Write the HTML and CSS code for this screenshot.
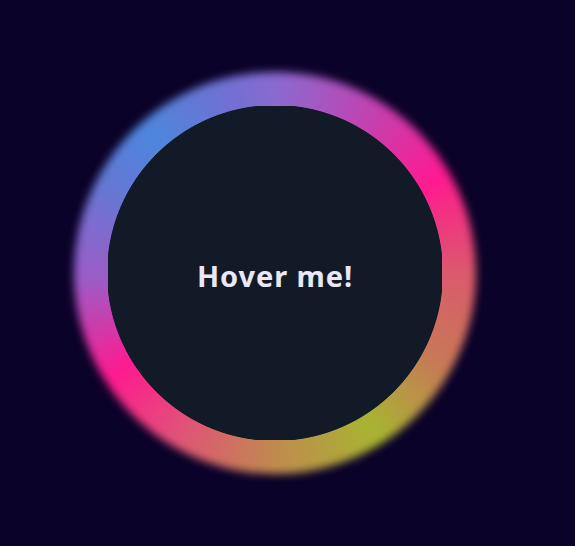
FILE: index.html
```html
<!DOCTYPE html>
<html lang="en">
<head>
<meta charset="utf-8">
<title>Hover me</title>
<link rel="stylesheet" href="styles.css">
</head>
<body>
<main class="stage">
  <div class="orb">
    <div class="ring"></div>
    <div class="core"><span class="label">Hover me!</span></div>
  </div>
</main>
</body>
</html>
```
FILE: styles.css
```css
html, body {
  margin: 0;
  padding: 0;
  background: #0b0229;
}
.stage {
  height: 546px;
  display: grid;
  place-items: center;
  padding-right: 25px;
  box-sizing: border-box;
}
.orb {
  width: 402px;
  height: 402px;
  display: grid;
}
.ring, .core {
  grid-area: 1 / 1;
}
.ring {
  border-radius: 50%;
  background: conic-gradient(
    #8a6ad0 0deg,
    #c043b2 30deg,
    #ff1a90 60deg,
    #db5a6c 90deg,
    #c87858 118deg,
    #a8b432 148deg,
    #c08a4e 180deg,
    #e2507a 212deg,
    #ff1a90 238deg,
    #9c5cc6 268deg,
    #6478d4 298deg,
    #4e86dc 318deg,
    #7070d2 345deg,
    #8a6ad0 360deg
  );
  filter: blur(4px);
}
.core {
  position: relative;
  z-index: 1;
  margin: 34px;
  background: radial-gradient(circle 169px at 50% 50%, #121a28 167.6px, rgba(18, 26, 40, 0) 168.4px);
  display: flex;
  align-items: center;
  justify-content: center;
}
.label {
  font-family: "Noto Sans", "Open Sans", sans-serif;
  font-weight: 700;
  font-size: 29px;
  letter-spacing: 0.9px;
  color: #e9e7f8;
  padding-top: 4px;
}
```
